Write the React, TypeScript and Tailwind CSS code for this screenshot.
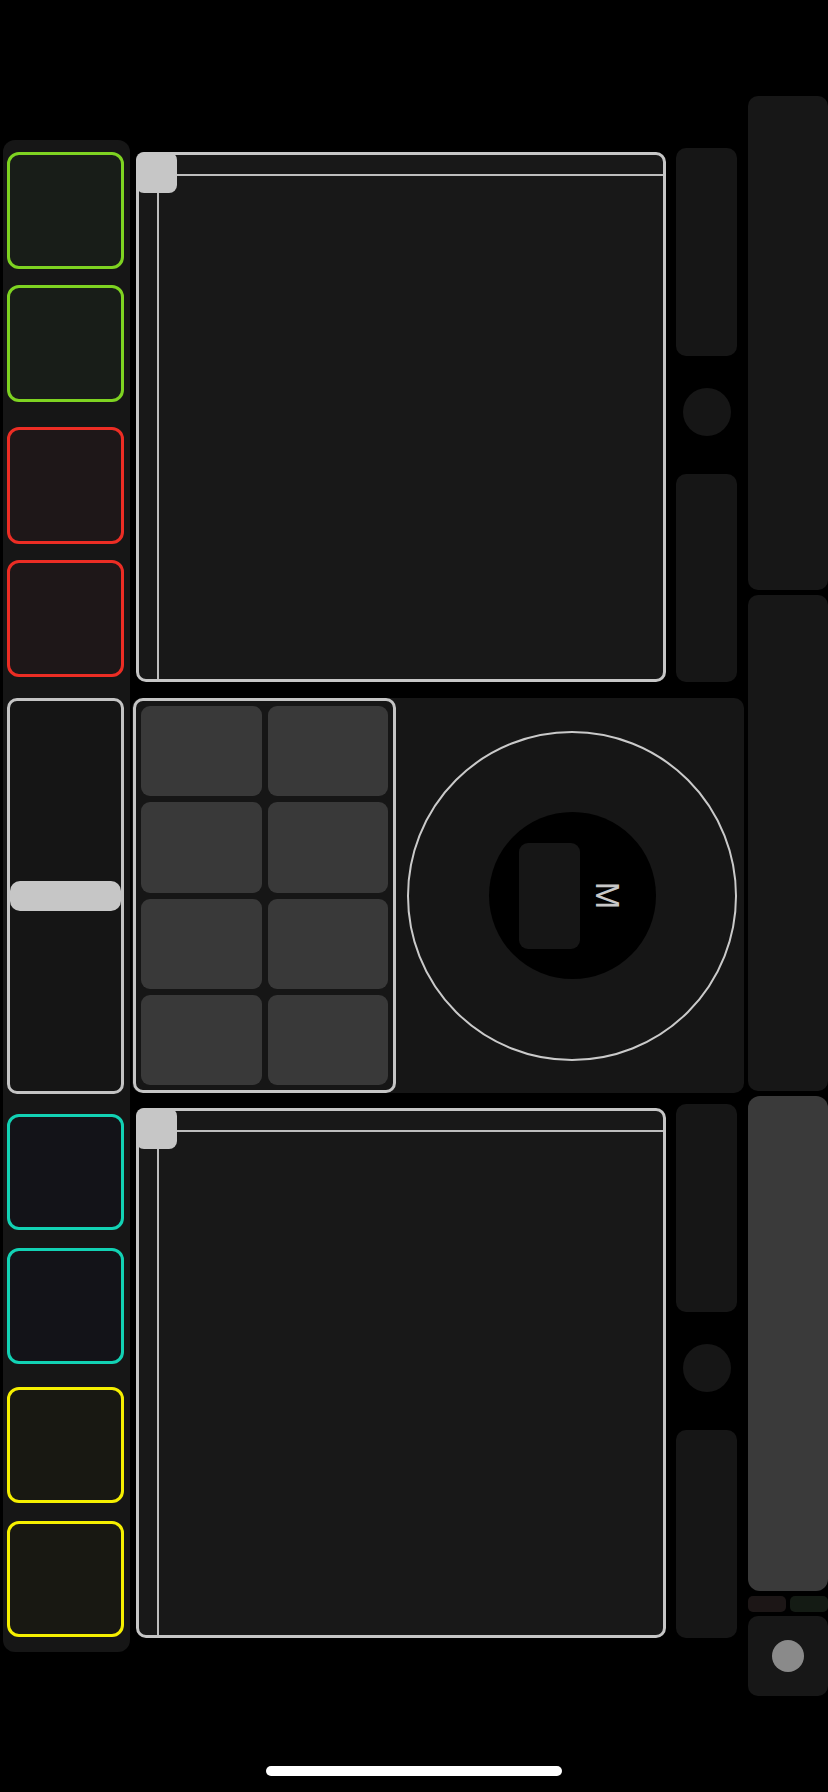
import React from 'react';

// ─── Data ────────────────────────────────────────────────────────────────────

const topPads = [
  { border: 'border-[#7ed321]', bg: 'bg-[#181d18]', mt: 'mt-0', h: 'h-[117px]' },
  { border: 'border-[#7ed321]', bg: 'bg-[#181d18]', mt: 'mt-[16px]', h: 'h-[117px]' },
  { border: 'border-[#ec2d24]', bg: 'bg-[#1e1718]', mt: 'mt-[25px]', h: 'h-[117px]' },
  { border: 'border-[#ec2d24]', bg: 'bg-[#1e1718]', mt: 'mt-[16px]', h: 'h-[117px]' },
];

const bottomPads = [
  { border: 'border-[#12d2b4]', bg: 'bg-[#131318]', mt: 'mt-0', h: 'h-[116px]' },
  { border: 'border-[#12d2b4]', bg: 'bg-[#131318]', mt: 'mt-[18px]', h: 'h-[116px]' },
  { border: 'border-[#f5ef00]', bg: 'bg-[#181812]', mt: 'mt-[23px]', h: 'h-[116px]' },
  { border: 'border-[#f5ef00]', bg: 'bg-[#181812]', mt: 'mt-[18px]', h: 'h-[116px]' },
];

type Pad = { border: string; bg: string; mt: string; h: string };

// ─── Pieces ──────────────────────────────────────────────────────────────────

function PadButton({ pad }: { pad: Pad }) {
  return <div className={`w-[117px] ${pad.h} rounded-[12px] border-[3px] ${pad.border} ${pad.bg} ${pad.mt}`} />;
}

function Fader() {
  return (
    <div className="w-[117px] h-[396px] mt-[21px] rounded-[10px] border-[3px] border-[#c4c4c4] bg-[#151515] flex flex-col">
      <div className="h-[180px]" />
      <div className="h-[30px] rounded-[10px] bg-[#c6c6c6]" />
    </div>
  );
}

function XYPad() {
  return (
    <div className="relative w-[530px] h-[530px] mt-[4px] ml-[4px] rounded-[10px] border-[3px] border-[#c6c6c6] bg-[#181818]">
      {/* crosshair */}
      <div className="absolute left-[19px] top-[19px] right-0 h-[2px] bg-[#bdbdbd]" />
      <div className="absolute left-[18px] top-[19px] bottom-0 w-[2px] bg-[#bdbdbd]" />
      <div className="absolute -left-[3px] -top-[3px] w-[41px] h-[41px] rounded-[8px] bg-[#c6c6c6]" />
    </div>
  );
}

function MiniStrip() {
  return (
    <div className="ml-[10px] w-[61px] h-[534px] flex flex-col items-center">
      <div className="w-[61px] h-[208px] rounded-[10px] bg-[#161616]" />
      <div className="mt-[32px] w-[48px] h-[48px] rounded-full bg-[#161616]" />
      <div className="mt-auto w-[61px] h-[208px] rounded-[10px] bg-[#161616]" />
    </div>
  );
}

function DeckRow({ mt }: { mt: string }) {
  return (
    <div className={`flex items-start ${mt}`}>
      <XYPad />
      <MiniStrip />
    </div>
  );
}

function JogPanel() {
  return (
    <div className="mt-[16px] w-[612px] h-[395px] rounded-[10px] bg-[#161616] flex">
      {/* 8 buttons */}
      <div className="ml-[1px] w-[263px] h-[395px] rounded-[10px] border-[3px] border-[#c4c4c4] p-[5px] grid grid-cols-2 grid-rows-4 gap-[6px]">
        {Array.from({ length: 8 }).map((_, i) => (
          <div key={i} className="rounded-[9px] bg-[#393939]" />
        ))}
      </div>

      {/* jog wheel */}
      <div className="flex-1 flex items-center justify-center pl-[4px]">
        <div className="w-[330px] h-[330px] rounded-full border-2 border-[#cacaca] flex items-center justify-center">
          <div className="w-[167px] h-[167px] rounded-full bg-black flex items-center justify-center gap-[14px] pr-[4px]">
            <div className="w-[61px] h-[106px] rounded-[9px] bg-[#161616]" />
            <span className="rotate-90 text-[#c8c8c8] text-[33px] leading-none font-light font-['Liberation_Sans',sans-serif]">M</span>
          </div>
        </div>
      </div>
    </div>
  );
}

function SideRail() {
  return (
    <div className="ml-[3px] mt-[96px] w-[80px] flex flex-col gap-[5px]">
      <div className="h-[494px] rounded-[10px] bg-[#171717]" />
      <div className="h-[496px] rounded-[10px] bg-[#171717]" />
      <div className="h-[495px] rounded-[12px] bg-[#3a3a3a]" />
      <div className="flex gap-[4px]">
        <div className="w-[38px] h-[16px] rounded-[5px] bg-[#1c1616]" />
        <div className="w-[38px] h-[16px] rounded-[5px] bg-[#141b14]" />
      </div>
      <div className="h-[80px] -mt-[1px] rounded-[10px] bg-[#171717] flex items-center justify-center pr-[1px]">
        <div className="w-[32px] h-[32px] rounded-full bg-[#8a8a8a]" />
      </div>
    </div>
  );
}

// ─── App ─────────────────────────────────────────────────────────────────────

export default function App() {
  return (
    <div className="w-[828px] h-[1792px] bg-black overflow-hidden flex flex-col">
      <div className="flex items-start">
        {/* pads + fader */}
        <div className="ml-[3px] mt-[140px] w-[127px] h-[1512px] rounded-[12px] bg-[#161616] pl-[4px] pt-[12px] flex flex-col">
          {topPads.map((p, i) => (
            <PadButton key={i} pad={p} />
          ))}
          <Fader />
          <div className="mt-[20px]" />
          {bottomPads.map((p, i) => (
            <PadButton key={i} pad={p} />
          ))}
        </div>

        {/* decks */}
        <div className="ml-[2px] mt-[148px] w-[613px] flex flex-col">
          <DeckRow mt="mt-0" />
          <JogPanel />
          <DeckRow mt="mt-[11px]" />
        </div>

        <SideRail />
      </div>

      <div className="mt-auto mb-[16px] self-center w-[296px] h-[10px] rounded-full bg-white" />
    </div>
  );
}
